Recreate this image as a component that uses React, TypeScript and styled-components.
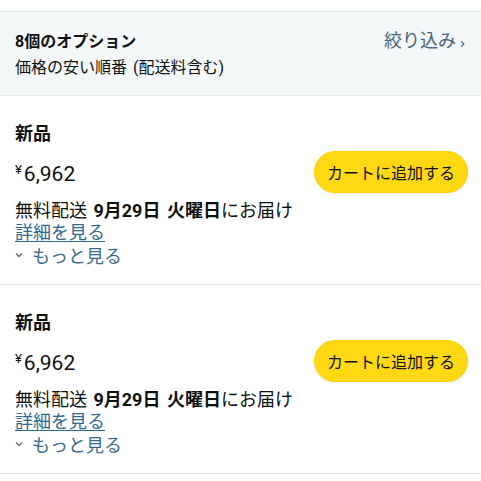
import React from "react";
import styled, { createGlobalStyle } from "styled-components";

const Global = createGlobalStyle`
  html, body { margin: 0; padding: 0; background: #ffffff; }
  body { font-family: Roboto, "Noto Sans CJK JP", sans-serif; color: #0f1111; }
`;

const Page = styled.div`
  width: 481px;
  padding-top: 11px;
  background: #ffffff;
`;

const Header = styled.div`
  display: flex;
  justify-content: space-between;
  align-items: flex-start;
  background: #f3f7f8;
  border-top: 1px solid #e4e8e9;
  border-bottom: 1px solid #e4e8e9;
  padding: 19px 16px 16px 15px;
`;

const HeaderText = styled.div`
  display: flex;
  flex-direction: column;
  gap: 4px;
`;

const Title = styled.div`
  font-size: 16px;
  line-height: 22px;
  font-weight: 700;
`;

const Sub = styled.div`
  font-size: 16px;
  line-height: 22px;
  word-spacing: 2px;
`;

const Filter = styled.div`
  display: flex;
  align-items: center;
  gap: 4px;
  font-size: 18px;
  line-height: 24px;
  color: #46657c;
  margin-top: -2px;
  svg { margin-top: 6px; }
`;

const Card = styled.div`
  padding: 26px 13px 15px 15px;
  border-bottom: 1px solid #e4e6e6;
`;

const Cond = styled.div`
  font-size: 18px;
  line-height: 24px;
  font-weight: 700;
`;

const PriceRow = styled.div`
  display: flex;
  justify-content: space-between;
  align-items: center;
  height: 42px;
  margin-top: 5px;
`;

const Price = styled.div`
  display: flex;
  align-items: flex-start;
  font-size: 21px;
  line-height: 28px;
  padding-top: 3px;
`;

const Yen = styled.span`
  font-size: 13px;
  line-height: 14px;
  margin-top: 3px;
  margin-right: 2px;
`;

const CartButton = styled.button`
  height: 42px;
  width: 154px;
  border-radius: 21px;
  border: 1px solid #fcd200;
  background: #ffd814;
  color: #0f1111;
  font-family: Roboto, "Noto Sans CJK JP", sans-serif;
  font-size: 16px;
  padding: 0;
  box-shadow: 0 1px 3px rgba(213, 217, 217, 0.5);
`;

const Delivery = styled.div`
  font-size: 18px;
  line-height: 22px;
  margin-top: 7px;
  word-spacing: 2px;
  b { font-weight: 700; }
`;

const Link = styled.a`
  display: inline-block;
  font-size: 18px;
  line-height: 22px;
  color: #2f6a90;
  text-decoration: underline;
  text-underline-offset: 2px;
`;

const More = styled.div`
  display: flex;
  align-items: center;
  gap: 9px;
  font-size: 18px;
  line-height: 24px;
  color: #3a6a8c;
  margin-top: 1px;
  svg { margin-top: -4px; }
`;

const Chevron = () => (
  <svg width="8" height="6" viewBox="0 0 8 6">
    <path d="M1 1.5 L4 4.5 L7 1.5" fill="none" stroke="#5a6b78" strokeWidth="1.3" />
  </svg>
);

const RightChevron = () => (
  <svg width="5" height="8" viewBox="0 0 5 8">
    <path d="M1.2 1.2 L3.8 4 L1.2 6.8" fill="none" stroke="#46657c" strokeWidth="1.2" />
  </svg>
);

const Offer = () => (
  <Card>
    <Cond>新品</Cond>
    <PriceRow>
      <Price>
        <Yen>¥</Yen>6,962
      </Price>
      <CartButton>カートに追加する</CartButton>
    </PriceRow>
    <Delivery>
      無料配送 <b>9月29日 火曜日</b>にお届け
    </Delivery>
    <Link>詳細を見る</Link>
    <More>
      <Chevron />
      もっと見る
    </More>
  </Card>
);

export default function App() {
  return (
    <Page>
      <Global />
      <Header>
        <HeaderText>
          <Title>8個のオプション</Title>
          <Sub>価格の安い順番 (配送料含む)</Sub>
        </HeaderText>
        <Filter>
          絞り込み
          <RightChevron />
        </Filter>
      </Header>
      <Offer />
      <Offer />
    </Page>
  );
}
